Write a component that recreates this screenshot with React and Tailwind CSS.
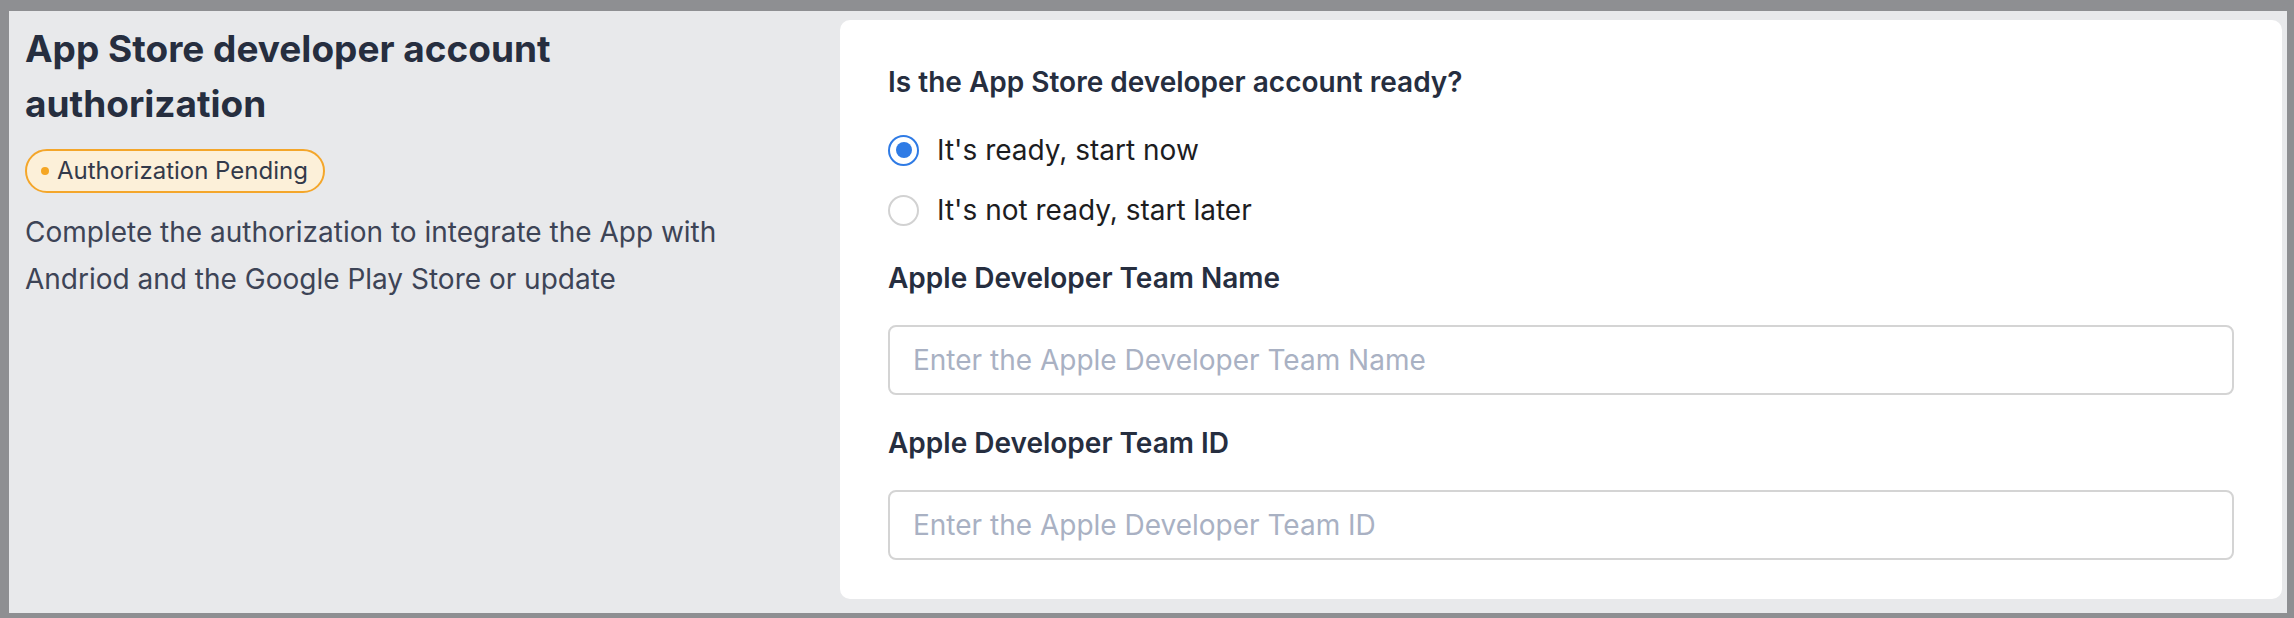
import { useState } from 'react';

const font = { fontFamily: 'Inter, "Noto Sans", sans-serif' };

const Radio = ({ checked, label, onClick }) => (
    <label onClick={onClick} className="flex h-[40px] cursor-pointer items-center">
        {checked ? (
            <span className="flex h-[31px] w-[31px] items-center justify-center rounded-full border-2 border-[#2f7be5]">
                <span className="h-[16px] w-[16px] rounded-full bg-[#2f7be5]"></span>
            </span>
        ) : (
            <span className="h-[31px] w-[31px] rounded-full border-2 border-[#d2d2d2]"></span>
        )}
        <span className="ml-[18px] text-[28px] leading-[40px] text-[#1d1d1f]">{label}</span>
    </label>
);

const Field = ({ label, placeholder, className = '' }) => (
    <div className={className}>
        <p className="text-[28px] font-semibold leading-[40px] text-[#262e3f]">{label}</p>
        <input
            type="text"
            placeholder={placeholder}
            className="mt-[27px] h-[70px] w-full rounded-[8px] border-2 border-[#d4d4d4] bg-white px-[23px] text-[28px] text-[#262e3f] outline-none placeholder:text-[#a9b1c3]"
        />
    </div>
);

export default function App() {
    const [ready, setReady] = useState(true);

    return (
        <div style={font} className="h-[618px] bg-[#8e8f92] pb-[5px] pl-[9px] pr-[7px] pt-[11px]">
            <div className="flex h-[602px] bg-[#e8e9eb]">
                <div className="w-[831px] shrink-0 pl-[16px] pr-[40px] pt-[10px]">
                    <h1 className="max-w-[640px] text-[37px] font-bold leading-[55px] text-[#262e3f]">
                        App Store developer account authorization
                    </h1>
                    <div className="mt-[18px] inline-flex h-[44px] items-center rounded-full border-2 border-[#f4a62a] bg-[#fcf0d9] pl-[14px] pr-[15px]">
                        <span className="h-[8px] w-[8px] rounded-full bg-[#f5a623]"></span>
                        <span className="ml-[8px] text-[24px] text-[#333a4a]">Authorization Pending</span>
                    </div>
                    <p className="mt-[16px] text-[28px] leading-[47px] text-[#3d4456]">
                        Complete the authorization to integrate the App with Andriod and the Google Play Store or update
                    </p>
                </div>
                <div className="mb-[14px] mr-[5px] mt-[9px] flex-1 rounded-[10px] bg-white px-[48px] pb-[40px] pt-[42px]">
                    <p className="text-[28px] font-semibold leading-[40px] text-[#262e3f]">
                        Is the App Store developer account ready?
                    </p>
                    <div className="mt-[28px] flex flex-col gap-[20px]">
                        <Radio checked={ready} label="It's ready, start now" onClick={() => setReady(true)} />
                        <Radio checked={!ready} label="It's not ready, start later" onClick={() => setReady(false)} />
                    </div>
                    <Field className="mt-[28px]" label="Apple Developer Team Name" placeholder="Enter the Apple Developer Team Name" />
                    <Field className="mt-[28px]" label="Apple Developer Team ID" placeholder="Enter the Apple Developer Team ID" />
                </div>
            </div>
        </div>
    );
}
